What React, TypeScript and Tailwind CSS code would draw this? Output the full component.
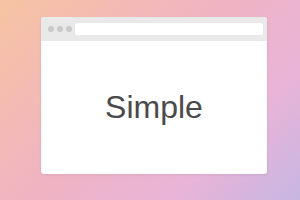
export default function App() {
  return (
    <div className="w-[300px] h-[200px] overflow-hidden bg-[linear-gradient(135deg,#f7c4a2_0%,#f0b3c2_45%,#e8b4d8_75%,#c6b6e2_100%)] pl-[41px] pt-[17px]">
      <div className="w-[226px] h-[157px] rounded-[3px] bg-white overflow-hidden flex flex-col shadow-[0_1px_3px_rgba(0,0,0,0.08)]">
        <div className="h-[24px] bg-[#e9e9e9] flex items-center pl-[7px] pr-[4px]">
          <div className="flex gap-[3px]">
            <span className="w-[6px] h-[6px] rounded-full bg-[#c9c9c9]" />
            <span className="w-[6px] h-[6px] rounded-full bg-[#c9c9c9]" />
            <span className="w-[6px] h-[6px] rounded-full bg-[#c9c9c9]" />
          </div>
          <div className="ml-[3px] flex-1 h-[12px] rounded-[2px] bg-white" />
        </div>
        <div className="flex-1 flex items-center justify-center">
          <span className="font-['Liberation_Sans',Arial,sans-serif] text-[32px] leading-none text-[#4a4a4a] mb-[2px]">
            Simple
          </span>
        </div>
      </div>
    </div>
  );
}
